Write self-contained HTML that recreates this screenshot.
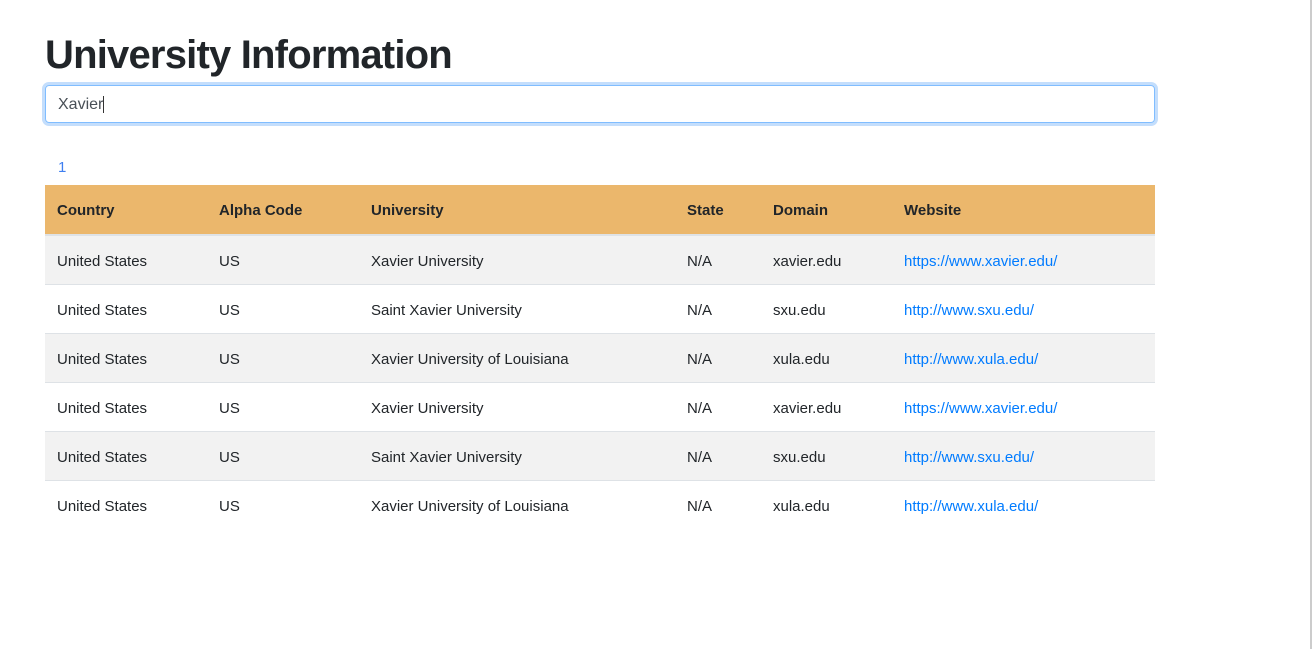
<!DOCTYPE html>
<html><head><style>
body{margin:0;width:1313px;height:649px;background:#fff;font-family:"Liberation Sans",sans-serif;color:#212529;position:relative;overflow:hidden}
h1{position:absolute;left:45px;top:29px;margin:0;font-size:40px;font-weight:bold;line-height:52px;letter-spacing:-0.8px}
.inp{position:absolute;left:45px;top:85px;width:1110px;height:38px;border:1px solid #80bdff;border-radius:4px;box-shadow:0 0 0 3px #c4defc;font-size:16px;line-height:38px;box-sizing:border-box;padding-left:12px;color:#495057}
.inp span{border-right:1px solid #333}
.pg{position:absolute;left:58px;top:159px;font-size:15px;color:#3f7ff0}
table{position:absolute;left:45px;top:185px;width:1110px;border-collapse:collapse;font-size:15px}
th{background:#ebb76c;text-align:left;height:50px;box-sizing:border-box;padding:2px 12px 0;border-bottom:2px solid #dee2e6;font-weight:bold}
td{height:49px;padding:3px 12px 0;border-top:1px solid #dee2e6;box-sizing:border-box}
tbody tr:nth-child(odd){background:#f2f2f2}
a{color:#007bff;text-decoration:none}
.sb{position:absolute;left:1310px;top:0;width:2px;height:649px;background:#ccc}
</style></head><body>
<h1>University Information</h1>
<div class="inp"><span>Xavier</span></div>
<div class="pg">1</div>
<table>
<colgroup><col style="width:162px"><col style="width:152px"><col style="width:316px"><col style="width:86px"><col style="width:131px"><col></colgroup>
<thead><tr><th>Country</th><th>Alpha Code</th><th>University</th><th>State</th><th>Domain</th><th>Website</th></tr></thead>
<tbody>
<tr><td>United States</td><td>US</td><td>Xavier University</td><td>N/A</td><td>xavier.edu</td><td><a>https://www.xavier.edu/</a></td></tr>
<tr><td>United States</td><td>US</td><td>Saint Xavier University</td><td>N/A</td><td>sxu.edu</td><td><a>http://www.sxu.edu/</a></td></tr>
<tr><td>United States</td><td>US</td><td>Xavier University of Louisiana</td><td>N/A</td><td>xula.edu</td><td><a>http://www.xula.edu/</a></td></tr>
<tr><td>United States</td><td>US</td><td>Xavier University</td><td>N/A</td><td>xavier.edu</td><td><a>https://www.xavier.edu/</a></td></tr>
<tr><td>United States</td><td>US</td><td>Saint Xavier University</td><td>N/A</td><td>sxu.edu</td><td><a>http://www.sxu.edu/</a></td></tr>
<tr><td>United States</td><td>US</td><td>Xavier University of Louisiana</td><td>N/A</td><td>xula.edu</td><td><a>http://www.xula.edu/</a></td></tr>
</tbody></table>
<div class="sb"></div>
</body></html>
